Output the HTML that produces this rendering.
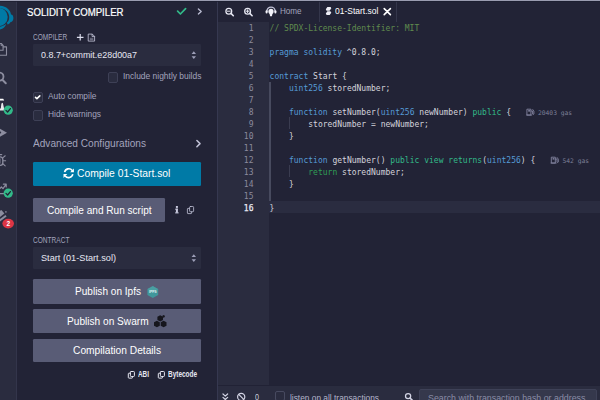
<!DOCTYPE html>
<html lang="en">
<head>
<meta charset="utf-8">
<title>Remix - Solidity Compiler</title>
<style>
html,body{margin:0;padding:0;}
body{width:600px;height:400px;overflow:hidden;background:#222336;position:relative;font-family:"Liberation Sans",sans-serif;}
.a{position:absolute;}
.t{position:absolute;white-space:pre;transform-origin:0 0;font-family:"Liberation Sans",sans-serif;}
.btn{position:absolute;border-radius:1.2px;}
.sec{background:#595c76;}
.pri{background:#007aa6;}
.sel{position:absolute;background:#2a2c3f;border-radius:1.2px;}
.cb{position:absolute;box-sizing:border-box;width:10px;height:10.5px;background:#2a2c3f;border:1px solid #3e4056;border-radius:2px;}
svg{position:absolute;left:0;top:0;overflow:visible;}
.ln{position:absolute;left:218px;width:35.5px;height:12px;line-height:12px;text-align:right;font-family:"DejaVu Sans Mono","Liberation Mono",monospace;font-size:8px;color:#8a8b9d;}
.ln.cur{color:#e9eaf3;-webkit-text-stroke:.25px #e9eaf3;}
.cl{position:absolute;left:269.6px;letter-spacing:0.012px;height:12px;line-height:12px;white-space:pre;font-family:"DejaVu Sans Mono","Liberation Mono",monospace;font-size:8px;color:#d4d4dc;}
.c{color:#608b4e;}.k{color:#569cd6;}.g{color:#32ba89;}.r{color:#2f9e55;}.d{color:#d4d4dc;}
.gas{position:absolute;white-space:pre;font-family:"DejaVu Sans Mono","Liberation Mono",monospace;font-size:6.3px;line-height:7px;color:#7e8099;}
</style>
</head>
<body>
<!-- ===== backgrounds ===== -->
<div class="a" style="left:0;top:0;width:16px;height:400px;background:#2a2c3f"></div>
<div class="a" style="left:16px;top:0;width:1px;height:400px;background:#33354b"></div>
<div class="a" style="left:217px;top:0;width:1px;height:400px;background:#363850"></div>
<div class="a" style="left:319.3px;top:1px;width:1px;height:20.5px;background:#34364b"></div>
<div class="a" style="left:395.6px;top:1px;width:1px;height:20.5px;background:#34364b"></div>
<div class="a" style="left:218px;top:22px;width:51px;height:363px;background:#2a2c3f"></div>
<div class="a" style="left:269px;top:201px;width:331px;height:12px;background:#2a2c40"></div>
<div class="a" style="left:218px;top:385px;width:382px;height:1px;background:#212235"></div>
<div class="a" style="left:218px;top:385.6px;width:382px;height:15px;background:#2a2c3f"></div>
<div class="a" style="left:419px;top:389px;width:178px;height:14px;background:#35384c;border:1px solid #3e4157;border-radius:2px;box-sizing:border-box"></div>
<div class="a" style="left:0;top:0;width:600px;height:1px;background:#9a9cb0"></div>
<div class="a" style="left:0;top:1px;width:600px;height:1px;background:#1d1e31;opacity:.8"></div>
<!-- indent guides -->
<div class="a" style="left:269px;top:82px;width:1.5px;height:119px;background:#474a5e"></div>
<div class="a" style="left:289px;top:117px;width:1px;height:12px;background:#3a3c50"></div>
<div class="a" style="left:289px;top:165px;width:1px;height:12px;background:#3a3c50"></div>

<!-- ===== side panel widgets ===== -->
<div class="sel" style="left:33px;top:44px;width:168px;height:22px"></div>
<div class="cb" style="left:107.5px;top:72px;width:10.5px"></div>
<div class="cb" style="left:33px;top:92.2px"></div>
<div class="cb" style="left:33px;top:110px"></div>
<div class="btn pri" style="left:33px;top:162px;width:168px;height:23.5px"></div>
<div class="btn sec" style="left:33px;top:198px;width:132.3px;height:23.7px"></div>
<div class="sel" style="left:33px;top:247px;width:168px;height:22px"></div>
<div class="btn sec" style="left:33px;top:279px;width:168px;height:24.5px"></div>
<div class="btn sec" style="left:33px;top:309px;width:168px;height:24px"></div>
<div class="btn sec" style="left:33px;top:338.5px;width:168px;height:23.5px"></div>
<div class="cb" style="left:275px;top:390.8px;border-color:#474a60"></div>

<!-- ===== texts ===== -->
<span class="t" style="left:27px;top:7.54px;font-size:10px;line-height:10px;color:#ffffff;font-weight:normal;-webkit-text-stroke:0.2px #ffffff;transform:scaleX(0.9611)">SOLIDITY COMPILER</span>
<span class="t" style="left:32.8px;top:33.10px;font-size:8.5px;line-height:8.5px;color:#a2a3bd;font-weight:normal;transform:scaleX(0.7702)">COMPILER</span>
<span class="t" style="left:41px;top:51.18px;font-size:9px;line-height:9px;color:#e6e7f2;font-weight:normal;transform:scaleX(0.9914)">0.8.7+commit.e28d00a7</span>
<span class="t" style="left:122.6px;top:72.08px;font-size:9px;line-height:9px;color:#a2a3bd;font-weight:normal;transform:scaleX(0.9382)">Include nightly builds</span>
<span class="t" style="left:48px;top:92.28px;font-size:9px;line-height:9px;color:#a2a3bd;font-weight:normal;transform:scaleX(0.9302)">Auto compile</span>
<span class="t" style="left:48px;top:110.18px;font-size:9px;line-height:9px;color:#a2a3bd;font-weight:normal;transform:scaleX(0.9293)">Hide warnings</span>
<span class="t" style="left:33px;top:138.53px;font-size:10px;line-height:10px;color:#a2a3bd;font-weight:normal;transform:scaleX(1.0112)">Advanced Configurations</span>
<span class="t" style="left:77px;top:168.53px;font-size:10px;line-height:10px;color:#ffffff;font-weight:normal;transform:scaleX(1.0310)">Compile 01-Start.sol</span>
<span class="t" style="left:47px;top:205.53px;font-size:10px;line-height:10px;color:#ffffff;font-weight:normal;transform:scaleX(1.0064)">Compile and Run script</span>
<span class="t" style="left:33px;top:235.80px;font-size:8.5px;line-height:8.5px;color:#a2a3bd;font-weight:normal;transform:scaleX(0.7706)">CONTRACT</span>
<span class="t" style="left:41px;top:254.28px;font-size:9px;line-height:9px;color:#e6e7f2;font-weight:normal;transform:scaleX(1.0200)">Start (01-Start.sol)</span>
<span class="t" style="left:75px;top:286.54px;font-size:10px;line-height:10px;color:#ffffff;font-weight:normal;transform:scaleX(1.0060)">Publish on Ipfs</span>
<span class="t" style="left:67.4px;top:316.74px;font-size:10px;line-height:10px;color:#ffffff;font-weight:normal;transform:scaleX(1.0125)">Publish on Swarm</span>
<span class="t" style="left:73px;top:345.54px;font-size:10px;line-height:10px;color:#ffffff;font-weight:normal;transform:scaleX(1.0214)">Compilation Details</span>
<span class="t" style="left:138px;top:370.40px;font-size:8.5px;line-height:8.5px;color:#e6e7f2;font-weight:bold;transform:scaleX(0.7513)">ABI</span>
<span class="t" style="left:168px;top:370.40px;font-size:8.5px;line-height:8.5px;color:#e6e7f2;font-weight:bold;transform:scaleX(0.7579)">Bytecode</span>
<span class="t" style="left:280px;top:7.08px;font-size:9px;line-height:9px;color:#a2a3bd;font-weight:normal;transform:scaleX(0.8994)">Home</span>
<span class="t" style="left:335px;top:7.18px;font-size:9px;line-height:9px;color:#ffffff;font-weight:normal;transform:scaleX(0.9428)">01-Start.sol</span>
<span class="t" style="left:255px;top:392.88px;font-size:9px;line-height:9px;color:#c9cade;font-weight:normal;transform:scaleX(0.7975)">0</span>
<span class="t" style="left:290px;top:393.58px;font-size:9px;line-height:9px;color:#b4b5cb;font-weight:normal;transform:scaleX(0.9265)">listen on all transactions</span>
<span class="t" style="left:427.6px;top:393.58px;font-size:9px;line-height:9px;color:#8a8ca6;font-weight:normal;transform:scaleX(0.9801)">Search with transaction hash or address</span>
<span class="gas" style="left:538px;top:109.4px">20403 gas</span>
<span class="gas" style="left:562.5px;top:157.4px">542 gas</span>

<!-- ===== code ===== -->
<div class="ln" style="top:23.4px">1</div>
<div class="cl" style="top:23.4px"><span class="c">// SPDX-License-Identifier: MIT</span></div>
<div class="ln" style="top:35.4px">2</div>
<div class="ln" style="top:47.4px">3</div>
<div class="cl" style="top:47.4px"><span class="k">pragma solidity</span><span class="d"> ^0.8.0;</span></div>
<div class="ln" style="top:59.4px">4</div>
<div class="ln" style="top:71.4px">5</div>
<div class="cl" style="top:71.4px"><span class="k">contract</span><span class="d"> Start {</span></div>
<div class="ln" style="top:83.4px">6</div>
<div class="cl" style="top:83.4px"><span class="d">    </span><span class="k">uint256</span><span class="d"> storedNumber;</span></div>
<div class="ln" style="top:95.4px">7</div>
<div class="ln" style="top:107.4px">8</div>
<div class="cl" style="top:107.4px"><span class="d">    </span><span class="k">function</span><span class="d"> setNumber(</span><span class="k">uint256</span><span class="d"> newNumber) </span><span class="g">public</span><span class="d"> {</span></div>
<div class="ln" style="top:119.4px">9</div>
<div class="cl" style="top:119.4px"><span class="d">        storedNumber = newNumber;</span></div>
<div class="ln" style="top:131.4px">10</div>
<div class="cl" style="top:131.4px"><span class="d">    }</span></div>
<div class="ln" style="top:143.4px">11</div>
<div class="ln" style="top:155.4px">12</div>
<div class="cl" style="top:155.4px"><span class="d">    </span><span class="k">function</span><span class="d"> getNumber() </span><span class="g">public</span><span class="d"> </span><span class="g">view</span><span class="d"> </span><span class="g">returns</span><span class="d">(</span><span class="k">uint256</span><span class="d">) {</span></div>
<div class="ln" style="top:167.4px">13</div>
<div class="cl" style="top:167.4px"><span class="d">        </span><span class="r">return</span><span class="d"> storedNumber;</span></div>
<div class="ln" style="top:179.4px">14</div>
<div class="cl" style="top:179.4px"><span class="d">    }</span></div>
<div class="ln" style="top:191.4px">15</div>
<div class="ln cur" style="top:203.4px">16</div>
<div class="cl" style="top:203.4px"><span class="d">}</span></div>

<!-- ===== icons ===== -->
<svg width="600" height="400" viewBox="0 0 600 400" fill="none" stroke-linecap="round" stroke-linejoin="round">
<!-- header: success check + chevron -->
<polyline points="177.6,11.2 180.4,14 185.6,8.6" stroke="#32ba89" stroke-width="1.7"/>
<polyline points="198.4,8.9 201.2,11.4 198.4,13.9" stroke="#b9bad0" stroke-width="1.4"/>
<!-- plus + file icons next to COMPILER -->
<path d="M76.9 37.3H83.5M80.2 34V40.6" stroke="#dcdded" stroke-width="1.2" stroke-linecap="butt"/>
<path d="M88.6 34.1H92.3L94.6 36.4V41.1H88.6Z M92.1 34.3V36.6H94.4" stroke="#c9cade" stroke-width=".8"/>
<path d="M90.2 38.3H93M90.2 39.6H93" stroke="#c9cade" stroke-width=".6" opacity=".8"/>
<!-- select carets -->
<path d="M191.6 54H196L193.8 51.3Z M191.6 56.2H196L193.8 58.9Z" fill="#9d9fb8"/>
<path d="M191.6 257H196L193.8 254.3Z M191.6 259.2H196L193.8 261.9Z" fill="#9d9fb8"/>
<!-- checked tick (auto compile) -->
<polyline points="35.5,97.3 36.9,98.6 39.8,95.9" stroke="#ffffff" stroke-width="1.6"/>
<!-- advanced config chevron -->
<polyline points="196.9,140.5 200,143.6 196.9,146.7" stroke="#c0c1d6" stroke-width="1.55"/>
<!-- refresh (sync) icon in compile button -->
<g stroke="#ffffff" stroke-width="1.6" stroke-linecap="butt">
<path d="M64.6 172.2A4.3 4.3 0 0 1 72.2 170.4"/>
<path d="M72.8 174.2A4.3 4.3 0 0 1 65.2 176"/>
</g>
<path d="M73.9 168.5V172.3H70.1Z M63.5 177.9V174.1H67.3Z" fill="#ffffff"/>
<!-- info "i" + copy next to run script -->
<g fill="#c9cade"><rect x="175.9" y="206" width="2" height="1.9"/><rect x="175.2" y="208.7" width="2.7" height="1"/><rect x="175.9" y="208.7" width="2" height="4"/><rect x="175.2" y="212.3" width="3.4" height="1.1"/></g>
<g stroke="#b9bad0" stroke-width=".85"><rect x="189.6" y="206.5" width="4" height="5.2" rx=".8"/><path d="M189.4 208.4H188a.6.6 0 0 0-.6.6V213a.6.6 0 0 0 .6.6H191a.6.6 0 0 0 .6-.6V212"/></g>
<!-- IPFS hexagon -->
<path d="M152.8 286L158.2 289V295L152.8 298L147.4 295V289Z" fill="#40979b"/>
<path d="M152.8 286L158.2 289L152.8 292L147.4 289Z" fill="#5fb3b3" opacity=".3"/>
<text x="152.8" y="293.4" text-anchor="middle" font-family="Liberation Sans, sans-serif" font-weight="bold" font-size="3.5" fill="#e4f2f2" stroke="none">IPFS</text>
<!-- Swarm hexagons -->
<g fill="#16161d">
<path d="M160.2 315.2L163 316.8V320L160.2 321.6L157.4 320V316.8Z"/>
<path d="M156.9 320.7L159.8 322.3V325.7L156.9 327.3L154 325.7V322.3Z"/>
<path d="M163.6 320.7L166.5 322.3V325.7L163.6 327.3L160.7 325.7V322.3Z"/>
<path d="M163.6 315L164.8 315.7V317L163.6 317.7L162.4 317V315.7Z"/>
</g>
<!-- ABI / Bytecode copy icons -->
<g stroke="#e6e7f2" stroke-width="1"><rect x="130.4" y="371.5" width="4" height="5" rx=".8"/><path d="M130.2 373.2H128.9a.6.6 0 0 0-.6.6V377.5a.6.6 0 0 0 .6.6H131.9a.6.6 0 0 0 .6-.6V376.8"/>
<rect x="160.4" y="371.5" width="4" height="5" rx=".8"/><path d="M160.2 373.2H158.9a.6.6 0 0 0-.6.6V377.5a.6.6 0 0 0 .6.6H161.9a.6.6 0 0 0 .6-.6V376.8"/></g>
<!-- editor tab bar: zoom out / zoom in -->
<g stroke="#e6e7f2" stroke-width="1.3"><circle cx="228.8" cy="11.2" r="2.9"/><path d="M231 13.4L233.3 15.7" stroke-width="1.6"/><path d="M227.4 11.2H230.2" stroke-width="1"/>
<circle cx="247.6" cy="11.2" r="2.9"/><path d="M249.8 13.4L252.1 15.7" stroke-width="1.6"/><path d="M246.2 11.2H249M247.6 9.8V12.6" stroke-width="1"/></g>
<!-- home tab logo (small remix head) -->
<path d="M266.9 11.2A4.1 4.1 0 0 1 275.1 11.2" stroke="#c3c4d8" stroke-width="1.3"/>
<g fill="#f2f2f9"><circle cx="271" cy="11.4" r="2.6"/><rect x="265.6" y="10.3" width="2" height="3.1" rx="1"/><rect x="274.4" y="10.3" width="2" height="3.1" rx="1"/><path d="M269.5 13.6H272.5L271.9 16.2H270.1Z"/></g>
<!-- solidity file icon on active tab -->
<g fill="#eeeef6"><path d="M325.8 9.3L327.4 6.9H330.6L331.3 8.3L329.6 10.8H326.6Z"/><path d="M327.4 11.2H330.4L331.3 12.7L329.7 15H326.6L325.8 13.6Z"/></g>
<!-- close X -->
<path d="M384.2 8.6L390.4 14.6M390.4 8.6L384.2 14.6" stroke="#ffffff" stroke-width="1.6"/>
<!-- gas pump icons -->
<g stroke="#8385a0" stroke-width=".9" fill="none">
<rect x="527.3" y="109.2" width="3.6" height="5.8"/><path d="M526.6 115.1H531.7"/><rect x="528.2" y="110.1" width="1.8" height="1.5" fill="#8385a0" stroke="none"/><path d="M531 111H532.6V114a.7.7 0 0 0 1.3 0V111.2L532.8 109.6"/>
<rect x="551.7" y="157.2" width="3.6" height="5.8"/><path d="M551 163.1H556.1"/><rect x="552.6" y="158.1" width="1.8" height="1.5" fill="#8385a0" stroke="none"/><path d="M555.4 159H557V162a.7.7 0 0 0 1.3 0V159.2L557.2 157.6"/>
</g>
<!-- terminal bar: double chevron, ban, search -->
<path d="M223 394L225.3 396.1L227.6 394M223 397.4L225.3 399.5L227.6 397.4" stroke="#d3d4e4" stroke-width="1.2"/>
<g stroke="#d3d4e4" stroke-width="1.2"><circle cx="241.2" cy="396.9" r="3.6"/><path d="M238.7 394.4L243.7 399.4"/></g>
<g stroke="#d3d4e4" stroke-width="1.25"><circle cx="408.1" cy="396.1" r="2.6"/><path d="M410.1 398.1L412.4 400.4" stroke-width="1.5"/></g>
<!-- ===== icon bar (cropped at the left edge) ===== -->
<!-- remix logo -->
<g fill="#007aa6" stroke="none">
<circle cx="-1.5" cy="17" r="9.2"/>
<path d="M-2 5.8C6 5.6 10.4 10 11 14.4C12.6 14.6 13.4 15.8 13.4 18C13.4 20.4 12.4 21.8 10.6 22C9.8 23.6 8.6 24 7.6 24.6L6.8 22.6C8.4 21.8 9.2 20 9.2 17C9.2 11.6 4.4 7.8 -2 7.8Z"/>
<path d="M-2 26.8C1.6 26.8 4.6 25.6 6.2 23.8C5.6 26.4 3.2 29 0 29.6L-2 29.6Z"/>
</g>
<!-- file explorer -->
<g stroke="#8c8d9f" stroke-width="1.1"><path d="M3.2 46.9H6.5V55.3H-3"/><path d="M-2 43.5H1.3L3.1 45.3V50.2H-2"/><path d="M1.1 43.7V45.6H2.9" stroke-width=".9"/></g>
<!-- search -->
<g stroke="#8c8d9f" stroke-width="1.8"><circle cx="-0.6" cy="76.6" r="4.1"/><path d="M2.6 80L5.8 83.2" stroke-width="2"/></g>
<!-- solidity (active) + success badge -->
<g fill="#ffffff"><path d="M-2 98.7H3.2L4.2 100.6H-2Z"/><path d="M1.4 103.4L2.8 102.8L4.5 110.6H-2V108.6L0.8 108.6Z" opacity=".9"/></g>
<circle cx="8.2" cy="110.2" r="4.6" fill="#32ba89"/>
<polyline points="6,110.4 7.6,112 10.4,108.6" stroke="#222336" stroke-width="1.3"/>
<!-- deploy -->
<g fill="#8c8d9f"><path d="M-2 127.6L7 132.7L-2 137.8Z"/></g>
<circle cx="0.2" cy="132.4" r="1" fill="#2a2c3f"/>
<!-- debugger -->
<g stroke="#8c8d9f" stroke-width="1.3" fill="none"><rect x="-4" y="156.8" width="6.8" height="8.6" rx="2.6"/><path d="M-1 154.6H1.6" stroke-width="1.4"/><path d="M3 157.6L5.2 155.8M3.2 160.8H5.6M3 163.8L5.2 165.8" stroke-width="1.1"/></g>
<path d="M-2 158.4H0.8V163.4H-2Z" fill="#8c8d9f" opacity=".55"/>
<!-- static analysis + badge -->
<path d="M-2 190.2L1.4 187L3 188.6L6 184.4M6.2 187V184.2H3.4" stroke="#8c8d9f" stroke-width="1.2"/>
<path d="M-2 193.6H4" stroke="#8c8d9f" stroke-width="1.2"/>
<circle cx="8.2" cy="193.2" r="4.6" fill="#32ba89"/>
<polyline points="6,193.4 7.6,195 10.4,191.6" stroke="#222336" stroke-width="1.3"/>
<!-- unit testing + red badge -->
<g fill="#8c8d9f"><path d="M-2 212L1.4 210L4.4 213.4L-2 218.6Z"/><path d="M-2 220.4L5.4 215L6.6 216.6L-2 223Z"/><rect x="5.2" y="211.2" width="1.4" height="1.4"/></g>
<ellipse cx="8.2" cy="223.6" rx="5.8" ry="4.8" fill="#dc3545"/>
<text x="8.3" y="226" text-anchor="middle" font-family="Liberation Sans, sans-serif" font-weight="bold" font-size="6.6" fill="#ffffff" stroke="none">2</text>

</svg>
</body>
</html>
